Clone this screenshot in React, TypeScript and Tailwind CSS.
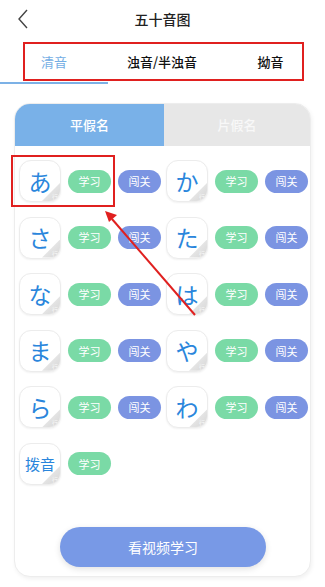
import React from "react";

const rows: { k: string; exam: boolean }[] = [
  { k: "あ", exam: true },
  { k: "か", exam: true },
  { k: "さ", exam: true },
  { k: "た", exam: true },
  { k: "な", exam: true },
  { k: "は", exam: true },
  { k: "ま", exam: true },
  { k: "や", exam: true },
  { k: "ら", exam: true },
  { k: "わ", exam: true },
  { k: "拨音", exam: false },
];

function KanaBox({ k }: { k: string }) {
  const small = k.length > 1;
  return (
    <div className="relative w-[42px] h-[42px] shrink-0 rounded-[12px] bg-white border border-[#ececec] shadow-[0_1px_2px_rgba(0,0,0,0.06)] overflow-hidden flex items-center justify-center">
      <span
        className={
          small
            ? "text-[15px] text-[#2a86dc] leading-none"
            : "text-[23px] text-[#2a86dc] leading-none"
        }
      >
        {k}
      </span>
      <div className="absolute right-0 bottom-0 w-[18px] h-[18px] bg-gradient-to-br from-[#f2f2f2] to-[#d6d6d6] [clip-path:polygon(100%_0,100%_100%,0_100%)]" />
      <span className="absolute right-[2px] bottom-[1px] text-[6px] leading-none text-[#f8f8f8]">行</span>
    </div>
  );
}

export default function App() {
  return (
    <div
      className="relative w-[325px] h-[587px] bg-white overflow-hidden"
      style={{ fontFamily: '"Noto Sans CJK SC", "Noto Sans", sans-serif' }}
    >
      {/* header */}
      <div className="relative h-[38px] flex items-center justify-center">
        <svg className="absolute left-[16px] top-[9px]" width="14" height="20" viewBox="0 0 14 20">
          <path d="M11 1 L3 10 L11 19" fill="none" stroke="#444" strokeWidth="1.4" />
        </svg>
        <span className="text-[14px] text-[#222] font-medium">五十音图</span>
      </div>

      {/* top tabs */}
      <div className="flex h-[46px] pt-[4px]">
        <div className="w-[108px] flex flex-col">
          <div className="flex-1 flex items-center justify-center text-[13px] text-[#74aee4]">清音</div>
          <div className="h-[2px] bg-[#7cb1e6]" />
        </div>
        <div className="w-[108px] flex items-center justify-center pb-[2px] text-[13px] text-[#111] font-medium">浊音/半浊音</div>
        <div className="w-[109px] flex items-center justify-center pb-[2px] text-[13px] text-[#111] font-medium">拗音</div>
      </div>

      {/* card */}
      <div className="ml-[14px] mt-[19px] w-[297px] h-[474px] rounded-[16px] bg-white border border-[#ededed] shadow-[1px_2px_4px_rgba(0,0,0,0.06)] overflow-hidden flex flex-col">
        <div className="flex h-[42px]">
          <div className="w-[149px] bg-[#79b1e8] flex items-center justify-center text-[13px] font-medium text-white">平假名</div>
          <div className="flex-1 bg-[#e7e7e7] flex items-center justify-center text-[13px] font-medium text-[#f8f8f8]">片假名</div>
        </div>

        <div className="grid grid-cols-[147px_147px] gap-y-[14.6px] pl-[4px] pt-[14px]">
          {rows.map((r) => (
            <div key={r.k} className="flex items-center gap-[7px]">
              <KanaBox k={r.k} />
              <div className="w-[43px] h-[23px] rounded-full bg-[#7adaa6] flex items-center justify-center text-[11px] text-white">学习</div>
              {r.exam && (
                <div className="w-[43px] h-[23px] rounded-full bg-[#7b94e2] flex items-center justify-center text-[11px] text-white">闯关</div>
              )}
            </div>
          ))}
        </div>

        <div className="mt-auto mb-[9px] ml-[45px] w-[206px] h-[40px] rounded-full bg-[#7899e6] shadow-[0_2px_6px_rgba(0,0,0,0.12)] flex items-center justify-center text-[14px] text-white">
          看视频学习
        </div>
      </div>

      {/* annotations */}
      <div className="absolute left-[23px] top-[42px] w-[281px] h-[39px] border-2 border-[#e0201f]" />
      <div className="absolute left-[11px] top-[155px] w-[104px] h-[52px] border-2 border-[#e0201f]" />
      <svg className="absolute left-0 top-0" width="325" height="587">
        <line x1="195" y1="315" x2="112" y2="219" stroke="#e0201f" strokeWidth="2" />
        <polygon points="105,211 117,215 109,222" fill="#e0201f" />
      </svg>
    </div>
  );
}
